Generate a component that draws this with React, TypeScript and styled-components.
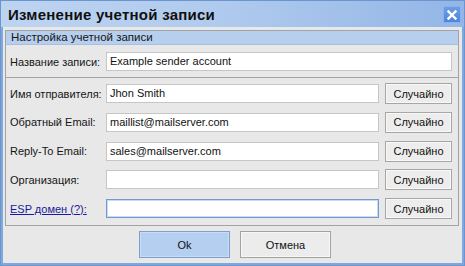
import React from "react";
import styled, { createGlobalStyle } from "styled-components";

const Global = createGlobalStyle`
  html, body { margin: 0; padding: 0; background: #ffffff; }
  body { font-family: "Liberation Sans", Arial, sans-serif; }
  * { box-sizing: border-box; }
`;

const Window = styled.div`
  width: 465px;
  height: 266px;
  display: flex;
  flex-direction: column;
  background: #7fa8dd;
  border: 1px solid #6b95cf;
`;

const TitleBar = styled.div`
  height: 26px;
  flex: none;
  display: flex;
  align-items: center;
  justify-content: space-between;
  padding: 0 3px 0 7px;
  background: linear-gradient(to right, #bdd4f1 0%, #b1cbee 45%, #93b6e6 100%);
`;

const Title = styled.div`
  font-family: "Liberation Sans", Arial, sans-serif;
  font-weight: bold;
  font-size: 15px;
  color: #101010;
  letter-spacing: 0.25px;
`;

const CloseButton = styled.div`
  width: 18px;
  height: 17px;
  margin-top: 1px;
  display: flex;
  align-items: center;
  justify-content: center;
  background: linear-gradient(#6c9de6, #4f86dc);
  border: 1px solid #8ab2ec;
`;

const Body = styled.div`
  flex: 1;
  margin: 0 2px 2px 2px;
  padding: 3px 3px 0 2px;
  background: #e8e8e8;
  display: flex;
  flex-direction: column;
`;

const Group = styled.div`
  border: 1px solid #a3a3a3;
  display: flex;
  flex-direction: column;
`;

const GroupHeader = styled.div`
  height: 14px;
  line-height: 13px;
  padding-left: 5px;
  background: #b6cfee;
  border-bottom: 1px solid #a9bfdc;
  font-size: 11.5px;
  color: #151515;
`;

const Section = styled.div<{ $top: number; $bottom: number }>`
  display: flex;
  flex-direction: column;
  gap: 7.75px;
  padding: ${(p) => p.$top}px 6px ${(p) => p.$bottom}px 4px;
`;

const Divider = styled.div`
  height: 1px;
  background: #a3a3a3;
`;

const Row = styled.div`
  height: 21px;
  display: grid;
  grid-template-columns: 96px 1fr auto;
  align-items: center;
`;

const Label = styled.div<{ $link?: boolean }>`
  font-size: 11px;
  color: ${(p) => (p.$link ? "#1a1a9e" : "#151515")};
  text-decoration: ${(p) => (p.$link ? "underline" : "none")};
  white-space: nowrap;
`;

const Input = styled.div<{ $wide?: boolean; $focused?: boolean }>`
  grid-column: ${(p) => (p.$wide ? "2 / 4" : "2 / 3")};
  height: 19px;
  background: #ffffff;
  border: 1px solid ${(p) => (p.$focused ? "#7498d0" : "#c6c6c6")};
  box-shadow: ${(p) => (p.$focused ? "inset 0 0 0 1px #c9daf2" : "none")};
  font-size: 11px;
  line-height: 16px;
  padding-left: 3px;
  color: #111;
  white-space: nowrap;
  overflow: hidden;
`;

const SmallButton = styled.div`
  width: 67px;
  height: 21px;
  margin-left: 6px;
  display: flex;
  align-items: center;
  justify-content: center;
  background: #ededed;
  border: 1px solid #a6a6a6;
  box-shadow: inset 0 0 0 1px #f8f8f8;
  font-size: 11px;
  color: #111;
`;

const Footer = styled.div`
  display: flex;
  justify-content: center;
  gap: 10px;
  padding: 5px 0 0 6px;
`;

const DialogButton = styled.div<{ $primary?: boolean }>`
  width: 91px;
  height: 27px;
  display: flex;
  align-items: center;
  justify-content: center;
  font-size: 11px;
  color: #111;
  background: ${(p) => (p.$primary ? "#b5cff0" : "#ececec")};
  border: 1px solid ${(p) => (p.$primary ? "#7c9fcf" : "#a3a3a3")};
  box-shadow: inset 0 0 0 1px ${(p) => (p.$primary ? "#c9dcf4" : "#f7f7f7")};
`;

const fields = [
  { label: "Имя отправителя:", value: "Jhon Smith" },
  { label: "Обратный Email:", value: "maillist@mailserver.com" },
  { label: "Reply-To Email:", value: "sales@mailserver.com" },
  { label: "Организация:", value: "" },
  { label: "ESP домен (?):", value: "", link: true, focused: true },
];

export default function App() {
  return (
    <>
      <Global />
      <Window>
        <TitleBar>
          <Title>Изменение учетной записи</Title>
          <CloseButton>
            <svg width="10" height="10" viewBox="0 0 10 10">
              <path d="M1.5 1.5 L8.5 8.5 M8.5 1.5 L1.5 8.5" stroke="#ffffff" strokeWidth="2.4" strokeLinecap="square" />
            </svg>
          </CloseButton>
        </TitleBar>
        <Body>
          <Group>
            <GroupHeader>Настройка учетной записи</GroupHeader>
            <Section $top={6} $bottom={5}>
              <Row>
                <Label>Название записи:</Label>
                <Input $wide>Example sender account</Input>
              </Row>
            </Section>
            <Divider />
            <Section $top={5} $bottom={6}>
              {fields.map((f) => (
                <Row key={f.label}>
                  <Label $link={f.link}>{f.label}</Label>
                  <Input $focused={f.focused}>{f.value}</Input>
                  <SmallButton>Случайно</SmallButton>
                </Row>
              ))}
            </Section>
          </Group>
          <Footer>
            <DialogButton $primary>Ok</DialogButton>
            <DialogButton>Отмена</DialogButton>
          </Footer>
        </Body>
      </Window>
    </>
  );
}
